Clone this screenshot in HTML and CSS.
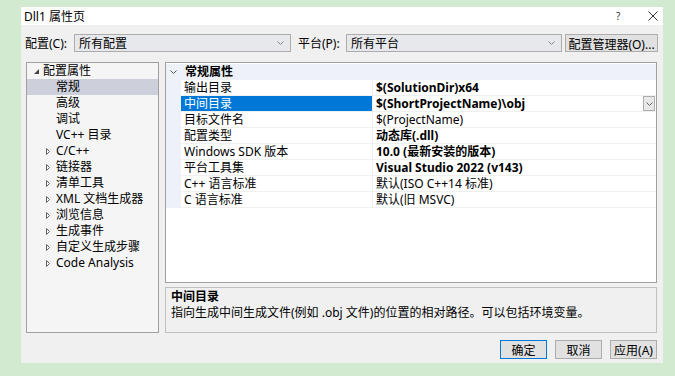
FILE: index.html
```html
<!DOCTYPE html>
<html lang="zh-CN">
<head>
    <meta charset="UTF-8">
    <title>Dll1 属性页</title>
    <link rel="stylesheet" href="styles.css">
</head>
<body>
    <div class="window">
        <div class="titlebar">
            <span class="title">Dll1 属性页</span>
            <span class="help">?</span>
            <span class="close">
                <svg width="10" height="10" viewBox="0 0 10 10"><path d="M0.5 0.5L9.5 9.5M9.5 0.5L0.5 9.5" stroke="#333" stroke-width="1"/></svg>
            </span>
        </div>

        <div class="toolbar">
            <span class="label">配置(C):</span>
            <div class="combo config">
                <span>所有配置</span>
                <svg width="7" height="4" viewBox="0 0 7 4"><path d="M0.5 0.5L3.5 3.5L6.5 0.5" stroke="#888" fill="none"/></svg>
            </div>
            <span class="label platform-label">平台(P):</span>
            <div class="combo platform">
                <span>所有平台</span>
                <svg width="7" height="4" viewBox="0 0 7 4"><path d="M0.5 0.5L3.5 3.5L6.5 0.5" stroke="#888" fill="none"/></svg>
            </div>
            <button class="btn manager">配置管理器(O)...</button>
        </div>

        <div class="main">
            <ul class="tree">
                <li class="root"><svg class="tri" width="5" height="5" viewBox="0 0 5 5"><path d="M5 0L5 5L0 5Z" fill="#444"/></svg>配置属性</li>
                <li class="child selected">常规</li>
                <li class="child">高级</li>
                <li class="child">调试</li>
                <li class="child">VC++ 目录</li>
                <li class="child node"><svg class="tri" width="4" height="7" viewBox="0 0 4 7"><path d="M0.5 0.5L3.5 3.5L0.5 6.5Z" stroke="#666" fill="none"/></svg>C/C++</li>
                <li class="child node"><svg class="tri" width="4" height="7" viewBox="0 0 4 7"><path d="M0.5 0.5L3.5 3.5L0.5 6.5Z" stroke="#666" fill="none"/></svg>链接器</li>
                <li class="child node"><svg class="tri" width="4" height="7" viewBox="0 0 4 7"><path d="M0.5 0.5L3.5 3.5L0.5 6.5Z" stroke="#666" fill="none"/></svg>清单工具</li>
                <li class="child node"><svg class="tri" width="4" height="7" viewBox="0 0 4 7"><path d="M0.5 0.5L3.5 3.5L0.5 6.5Z" stroke="#666" fill="none"/></svg>XML 文档生成器</li>
                <li class="child node"><svg class="tri" width="4" height="7" viewBox="0 0 4 7"><path d="M0.5 0.5L3.5 3.5L0.5 6.5Z" stroke="#666" fill="none"/></svg>浏览信息</li>
                <li class="child node"><svg class="tri" width="4" height="7" viewBox="0 0 4 7"><path d="M0.5 0.5L3.5 3.5L0.5 6.5Z" stroke="#666" fill="none"/></svg>生成事件</li>
                <li class="child node"><svg class="tri" width="4" height="7" viewBox="0 0 4 7"><path d="M0.5 0.5L3.5 3.5L0.5 6.5Z" stroke="#666" fill="none"/></svg>自定义生成步骤</li>
                <li class="child node"><svg class="tri" width="4" height="7" viewBox="0 0 4 7"><path d="M0.5 0.5L3.5 3.5L0.5 6.5Z" stroke="#666" fill="none"/></svg>Code Analysis</li>
            </ul>

            <div class="right">
                <div class="grid">
                    <div class="group">
                        <svg class="chev" width="7" height="4" viewBox="0 0 7 4"><path d="M0.5 0.5L3.5 3.5L6.5 0.5" stroke="#555" fill="none"/></svg>
                        <span>常规属性</span>
                    </div>
                    <div class="row"><span class="gutter"></span><span class="name">输出目录</span><span class="value bold">$(SolutionDir)x64</span></div>
                    <div class="row active"><span class="gutter"></span><span class="name">中间目录</span><span class="value bold">$(ShortProjectName)\obj<span class="drop"><svg width="7" height="4" viewBox="0 0 7 4"><path d="M0.5 0.5L3.5 3.5L6.5 0.5" stroke="#666" fill="none"/></svg></span></span></div>
                    <div class="row"><span class="gutter"></span><span class="name">目标文件名</span><span class="value">$(ProjectName)</span></div>
                    <div class="row"><span class="gutter"></span><span class="name">配置类型</span><span class="value bold">动态库(.dll)</span></div>
                    <div class="row"><span class="gutter"></span><span class="name">Windows SDK 版本</span><span class="value bold">10.0 (最新安装的版本)</span></div>
                    <div class="row"><span class="gutter"></span><span class="name">平台工具集</span><span class="value bold">Visual Studio 2022 (v143)</span></div>
                    <div class="row"><span class="gutter"></span><span class="name">C++ 语言标准</span><span class="value">默认(ISO C++14 标准)</span></div>
                    <div class="row"><span class="gutter"></span><span class="name">C 语言标准</span><span class="value">默认(旧 MSVC)</span></div>
                </div>
                <div class="desc">
                    <div class="desc-title">中间目录</div>
                    <div class="desc-text">指向生成中间生成文件(例如 .obj 文件)的位置的相对路径。可以包括环境变量。</div>
                </div>
            </div>
        </div>

        <div class="buttons">
            <button class="btn ok">确定</button>
            <button class="btn">取消</button>
            <button class="btn">应用(A)</button>
        </div>
    </div>
</body>
</html>
```

FILE: styles.css
```css
body {
    margin: 0;
    background-color: #d2ebd0;
    font-family: "Noto Sans", "Noto Sans CJK SC", sans-serif;
    font-size: 12px;
    color: #000;
}

.window {
    margin: 7px 0 0 21px;
    width: 642px;
    height: 356px;
    background-color: #f0f0f0;
    display: flex;
    flex-direction: column;
}

.titlebar {
    height: 18px;
    background-color: #fff;
    display: flex;
    align-items: center;
    padding-left: 3px;
}

.title {
    flex: 1;
    font-size: 12px;
}

.help {
    font-size: 10px;
    color: #333;
    width: 32px;
}

.close {
    width: 15px;
    display: flex;
}

.toolbar {
    display: flex;
    align-items: center;
    height: 18px;
    margin-top: 9px;
    padding-left: 4px;
}

.label {
    width: 49px;
}

.platform-label {
    margin-left: 7px;
    width: 48px;
}

.combo {
    height: 16px;
    border: 1px solid #acacac;
    background-color: #e6e8ec;
    display: flex;
    align-items: center;
    justify-content: space-between;
    padding: 0 6px 0 4px;
    box-sizing: content-box;
}

.combo.config {
    width: 205px;
}

.combo.platform {
    width: 204px;
}

.btn {
    font-family: "Noto Sans", "Noto Sans CJK SC", sans-serif;
    font-size: 12px;
    background-color: #e1e1e1;
    border: 1px solid #adadad;
    height: 19px;
    padding: 0;
    color: #000;
}

.manager {
    margin-left: 3px;
    width: 93px;
    height: 18px;
}

.main {
    display: flex;
    margin-top: 10px;
    padding-left: 5px;
    height: 271px;
}

.tree {
    list-style: none;
    margin: 0;
    padding: 0;
    width: 131px;
    border: 1px solid #a0a0a0;
    background-color: #f5f5f5;
}

.tree li {
    height: 16px;
    line-height: 16px;
    display: flex;
    align-items: center;
    white-space: nowrap;
}

.tree .root {
    padding-left: 7px;
}

.tree .root .tri {
    margin-right: 4px;
}

.tree .child {
    padding-left: 29px;
}

.tree .child.node {
    padding-left: 19px;
}

.tree .node .tri {
    margin-right: 6px;
}

.tree .selected {
    background-color: #cdcfdb;
}

.right {
    margin-left: 6px;
    width: 492px;
    display: flex;
    flex-direction: column;
}

.grid {
    height: 219px;
    border: 1px solid #a0a0a0;
    background-color: #fff;
    padding-top: 1px;
}

.group {
    height: 16px;
    line-height: 16px;
    display: flex;
    align-items: center;
    background-color: #eef2f8;
    font-weight: bold;
}

.group .chev {
    margin: 0 8px 0 4px;
}

.row {
    height: 15px;
    line-height: 15px;
    border-bottom: 1px solid #f0f0f0;
    display: flex;
    align-items: center;
    white-space: nowrap;
}

.gutter {
    width: 15px;
    height: 16px;
    background-color: #eef2f8;
}

.name {
    width: 188px;
    padding-left: 3px;
    height: 15px;
    border-right: 1px solid #f0f0f0;
}

.value {
    flex: 1;
    height: 15px;
    padding-left: 3px;
    display: flex;
    align-items: center;
}

.bold {
    font-weight: bold;
}

.active .name {
    background-color: #0078d7;
    color: #fff;
}

.drop {
    margin-left: auto;
    margin-right: 1px;
    width: 10px;
    height: 13px;
    border: 1px solid #adadad;
    background-color: #e8e8e8;
    display: flex;
    align-items: center;
    justify-content: center;
}

.desc {
    margin-top: 4px;
    height: 44px;
    border: 1px solid #c0c0c0;
    background-color: #f0f0f0;
    padding-left: 5px;
}

.desc-title {
    font-weight: bold;
    margin-top: 1px;
    line-height: 16px;
}

.desc-text {
    line-height: 16px;
}

.buttons {
    display: flex;
    justify-content: flex-end;
    gap: 8px;
    margin-top: 7px;
    padding-right: 6px;
}

.buttons .btn {
    width: 47px;
}

.buttons .ok {
    border-color: #0078d7;
}
```
